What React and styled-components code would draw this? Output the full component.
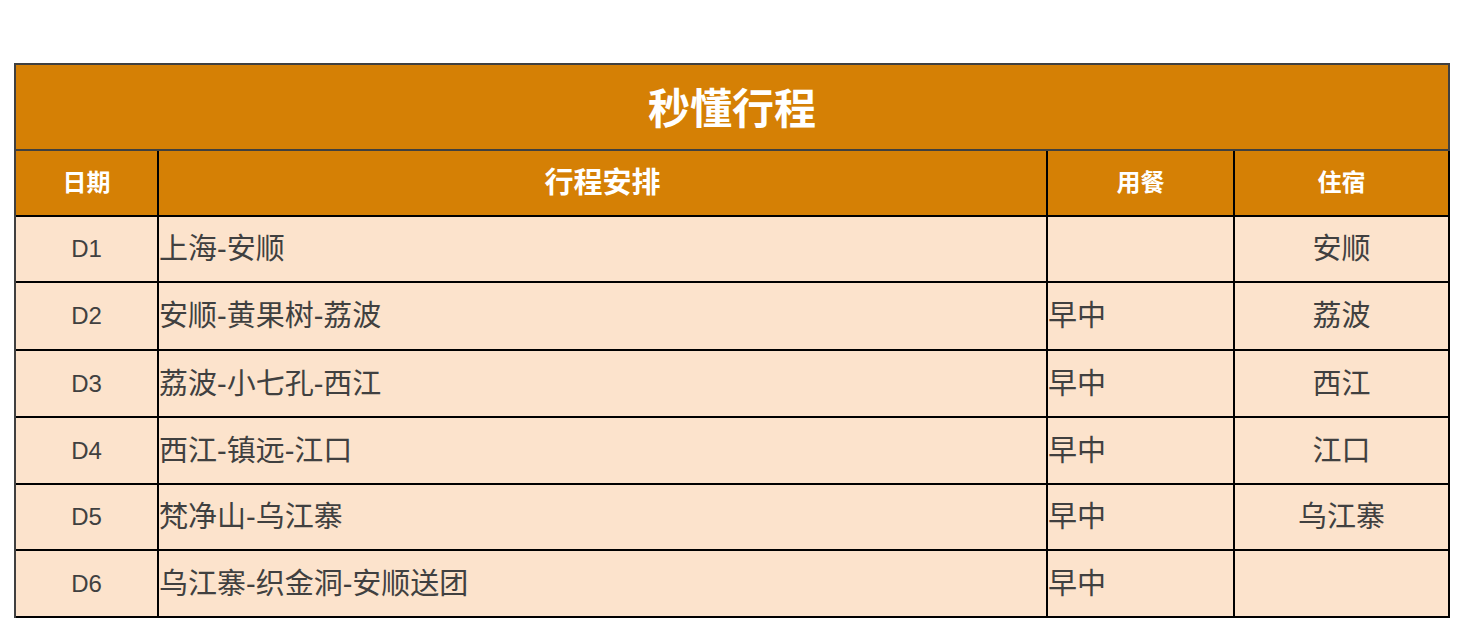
import React from "react";
import styled, { createGlobalStyle } from "styled-components";

const GlobalStyle = createGlobalStyle`
  html, body { margin: 0; padding: 0; background: #ffffff; }
  body { font-family: "Liberation Sans", "Noto Sans CJK SC", sans-serif; }
`;

const Page = styled.div`
  padding: 63px 0 0 14px;
`;

const Table = styled.div`
  display: grid;
  width: 1436px;
  box-sizing: border-box;
  grid-template-columns: 143px 889px 187px 215px;
  grid-template-rows: 86px 66px 66px 68px 67px 67px 66px 67px;
  border-top: 2px solid #404040;
  border-left: 2px solid #404040;
  font-family: "Liberation Sans", "Noto Sans CJK SC", sans-serif;
`;

const Cell = styled.div`
  box-sizing: border-box;
  display: flex;
  align-items: center;
  justify-content: ${(p) => (p.$align === "left" ? "flex-start" : "center")};
  border-right: 2px solid #000;
  border-bottom: 2px solid #000;
  background: #fce3cc;
  color: #404040;
  white-space: nowrap;
  overflow: hidden;
`;

const TitleCell = styled(Cell)`
  grid-column: 1 / -1;
  background: #d58005;
  color: #ffffff;
  font-size: 42px;
  font-weight: 700;
  padding-bottom: 4px;
  border-right-color: #404040;
  border-bottom-color: #404040;
`;

const HeadCell = styled(Cell)`
  background: #d58005;
  color: #ffffff;
  font-size: ${(p) => (p.$large ? "29px" : "24px")};
  font-weight: 700;
  padding-bottom: 6px;
`;

const DayCell = styled(Cell)`
  font-size: 24px;
`;

const TextCell = styled(Cell)`
  font-size: 29px;
  padding-bottom: 6px;
`;

const rows = [
  { day: "D1", route: "上海-安顺", meal: "", stay: "安顺" },
  { day: "D2", route: "安顺-黄果树-荔波", meal: "早中", stay: "荔波" },
  { day: "D3", route: "荔波-小七孔-西江", meal: "早中", stay: "西江" },
  { day: "D4", route: "西江-镇远-江口", meal: "早中", stay: "江口" },
  { day: "D5", route: "梵净山-乌江寨", meal: "早中", stay: "乌江寨" },
  { day: "D6", route: "乌江寨-织金洞-安顺送团", meal: "早中", stay: "" },
];

export default function App() {
  return (
    <>
      <GlobalStyle />
      <Page>
        <Table>
          <TitleCell>秒懂行程</TitleCell>
          <HeadCell>日期</HeadCell>
          <HeadCell $large>行程安排</HeadCell>
          <HeadCell>用餐</HeadCell>
          <HeadCell>住宿</HeadCell>
          {rows.map((r) => (
            <React.Fragment key={r.day}>
              <DayCell>{r.day}</DayCell>
              <TextCell $align="left">{r.route}</TextCell>
              <TextCell $align="left">{r.meal}</TextCell>
              <TextCell>{r.stay}</TextCell>
            </React.Fragment>
          ))}
        </Table>
      </Page>
    </>
  );
}
